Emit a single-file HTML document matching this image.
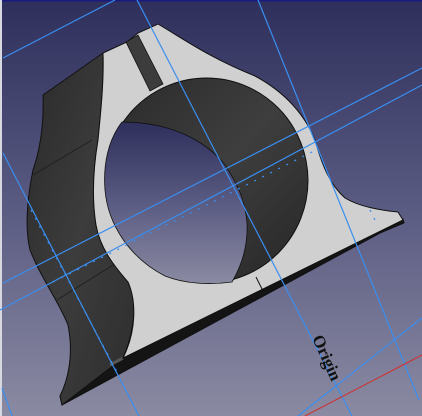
<!DOCTYPE html>
<html><head><style>
html,body{margin:0;padding:0;width:422px;height:416px;overflow:hidden}
svg{display:block}
</style></head><body>
<svg width="422" height="416" viewBox="0 0 422 416" xmlns="http://www.w3.org/2000/svg">
<defs>
<linearGradient id="bg" x1="0" y1="0" x2="0" y2="1">
<stop offset="0" stop-color="#2e2f5b"/>
<stop offset="0.5" stop-color="#5a5b82"/>
<stop offset="1" stop-color="#8a8aa2"/>
</linearGradient>
<linearGradient id="side" x1="0" y1="0" x2="1" y2="1">
<stop offset="0" stop-color="#2a2a2a"/>
<stop offset="0.5" stop-color="#3c3c3c"/>
<stop offset="1" stop-color="#2e2e2e"/>
</linearGradient>
<linearGradient id="hole" x1="0" y1="0" x2="1" y2="1">
<stop offset="0" stop-color="#2a2a2a"/>
<stop offset="0.5" stop-color="#3e3e3e"/>
<stop offset="1" stop-color="#262626"/>
</linearGradient>
</defs>
<rect width="422" height="416" fill="url(#bg)"/>
<rect width="422" height="1.5" fill="#1a1a80"/>
<rect x="0" y="0" width="2" height="416" fill="#d8d8e0"/>
<path d="M123,358 L403,219 L404,223 L380,233 L62,405 L60,396 Z" fill="#141414" stroke="#111" stroke-width="1"/>
<path d="M43,95 L103,53 C104,80 101,110 98,140 C93,170 92,200 96,225 C102,250 118,268 131,285 C137,300 135,330 123,358 L62,405 L60,396 C68,380 74,355 68,325 C58,300 42,280 30,250 C24,225 28,195 33,170 C40,150 44,125 43,95 Z" fill="url(#side)" stroke="#111" stroke-width="1"/>
<path d="M33,175 L92,140 M57,300 L118,262" stroke="#1e1e1e" stroke-width="0.8" fill="none"/>
<path d="M110,365 L123,358" stroke="#555" stroke-width="3"/>
<path d="M158,24 C185,40 210,58 255,76 C285,92 305,115 315,140 C322,165 330,185 345,198 C360,207 380,210 398,212 L403,220 L123,358 C137,330 136,300 128,282 C114,266 100,248 96,225 C92,200 93,170 98,140 C101,110 104,80 103,53 L127,42 L138,33 Z" fill="#d0d0d0" stroke="#111" stroke-width="1"/>
<path d="M126,42 L138,35 L163,84 L150,91 Z" fill="#3c3c3c" stroke="#111" stroke-width="0.8"/>
<ellipse cx="206.5" cy="180.5" rx="101.5" ry="102.5" fill="url(#hole)" stroke="#111" stroke-width="1"/>
<path d="M122,122 C108,140 103,165 105,190 C108,225 130,258 165,276 C185,284 210,285 232,282 C242,265 248,245 247,223 C245,200 238,185 225,165 C205,140 170,122 122,122 Z" fill="url(#bg)" stroke="#111" stroke-width="0.8"/>
<path d="M256,277 L263,291" stroke="#111" stroke-width="1"/>
<g stroke="#3a8ef0" stroke-width="1.2" fill="none">
<line x1="3" y1="58" x2="115" y2="0"/>
<line x1="137" y1="0" x2="352" y2="416"/>
<line x1="258" y1="0" x2="419" y2="400"/>
<line x1="3" y1="283" x2="422" y2="68"/>
<line x1="0" y1="310" x2="422" y2="85"/>
<line x1="3" y1="153" x2="139" y2="416"/>
<line x1="298" y1="416" x2="422" y2="318"/>
<line x1="2" y1="388" x2="12" y2="416"/>
</g>
<g stroke="#3a8ef0" stroke-width="1.3" stroke-dasharray="2,7" fill="none">
<line x1="31" y1="210" x2="117" y2="372"/>
<line x1="53" y1="282" x2="316" y2="150"/>
<line x1="370" y1="210" x2="378" y2="226"/>
</g>
<line x1="305" y1="416" x2="422" y2="355" stroke="#d03030" stroke-width="1"/>
<text x="0" y="0" transform="translate(312,338) rotate(66)" font-family="Liberation Serif, serif" font-size="17" font-weight="bold" fill="#111">Origin</text>
</svg>
</body></html>
